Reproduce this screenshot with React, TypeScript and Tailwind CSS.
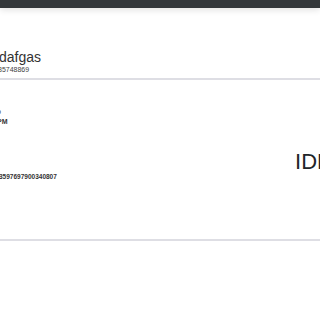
import React from "react";

export default function App() {
  return (
    <div className="w-[320px] h-[320px] overflow-hidden bg-white relative" style={{ fontFamily: '"Liberation Sans", Arial, sans-serif' }}>
      <div className="h-[8px] bg-[#33373a] shadow-[0_2px_6px_rgba(0,0,0,0.12)]" />
      <div className="flex flex-col pt-[41px] pb-[3px]">
        <div className="text-[14px] leading-[16px] text-[#333] -ml-[1px]">dafgas</div>
        <div className="text-[7px] leading-[8px] text-[#444] -ml-[2px] mt-[1px]">35748869</div>
      </div>
      <div className="h-[2px] bg-[#dedee4] mt-[1px]" />
      <div className="flex flex-row justify-between items-start">
        <div className="flex flex-col pt-[27px]">
          <div className="text-[7px] leading-[9px] text-[#333] -ml-[3px]">o</div>
          <div className="text-[7px] leading-[9px] font-bold text-[#333] -ml-[3px] mt-[1px]">PM</div>
          <div className="text-[6.5px] leading-[9px] font-bold text-[#333] -ml-[1px] mt-[46px]">3597697900340807</div>
        </div>
        <div className="text-[22px] leading-[26px] text-[#212529] mt-[69px] -mr-[13px] whitespace-nowrap">IDR</div>
      </div>
      <div className="h-[2px] bg-[#dedee4] mt-[58px]" />
    </div>
  );
}
